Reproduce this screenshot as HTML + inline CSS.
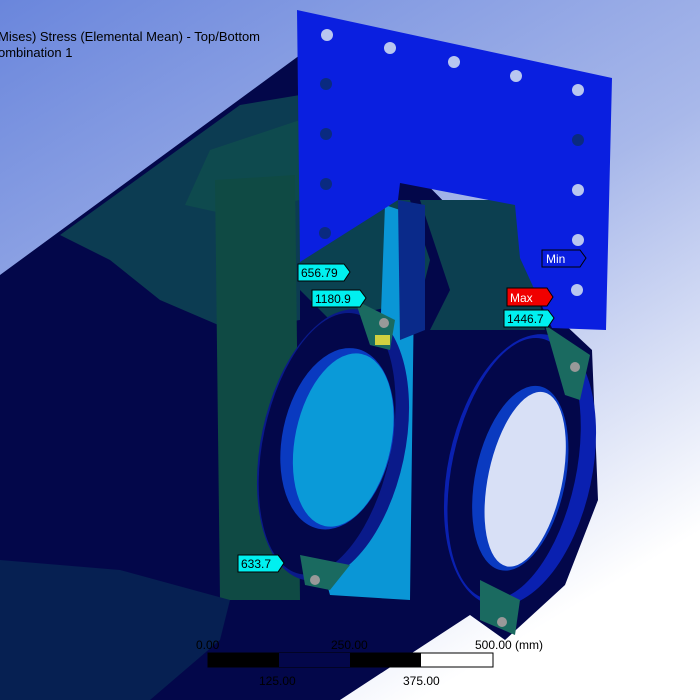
<!DOCTYPE html>
<html><head><meta charset="utf-8"><style>
html,body{margin:0;padding:0;width:700px;height:700px;overflow:hidden}
svg{display:block}
text{font-family:"Liberation Sans",sans-serif}
</style></head><body>
<svg width="700" height="700" viewBox="0 0 700 700" xmlns="http://www.w3.org/2000/svg">
<defs>
<linearGradient id="bg" x1="0" y1="0" x2="0.6" y2="1">
<stop offset="0" stop-color="#6a86dc"/><stop offset="0.55" stop-color="#a8b8ea"/><stop offset="1" stop-color="#ffffff"/>
</linearGradient>
</defs>
<rect width="700" height="700" fill="url(#bg)"/>
<!-- body -->
<polygon points="0,275 300,55 560,320 592,350 598,500 565,585 505,640 470,615 340,700 0,700" fill="#03074a"/>
<!-- teal regions -->
<polygon points="60,235 240,105 300,95 300,320 230,330 160,300 110,260" fill="#0c3c52"/>
<polygon points="210,150 300,120 300,200 230,215 185,205" fill="#0e4a4e"/>
<polygon points="215,180 295,175 300,600 220,600" fill="#0f4a44"/>
<polygon points="300,200 410,200 430,260 420,300 330,320 300,290" fill="#0b4150"/>
<polygon points="420,200 520,200 545,330 470,330 430,330 450,290" fill="#0c3f50"/>
<polygon points="0,560 120,570 230,600 220,640 150,700 0,700" fill="#062052"/>
<!-- light blue panel -->
<polygon points="385,205 415,215 410,600 330,595 320,560 360,480 380,340" fill="#0a96d6"/>
<polygon points="398,200 425,205 425,330 400,340" fill="#0a2a8a"/>
<!-- plate -->
<polygon points="297,10 612,78 606,330 552,328 520,258 515,205 400,183 398,200 300,262" fill="#0a1fe0"/>
<g fill="#b8c6f0">
<circle cx="327" cy="35" r="6"/><circle cx="390" cy="48" r="6"/><circle cx="454" cy="62" r="6"/><circle cx="516" cy="76" r="6"/><circle cx="578" cy="90" r="6"/>
<circle cx="578" cy="190" r="6"/><circle cx="578" cy="240" r="6"/><circle cx="577" cy="290" r="6"/>
</g>
<g fill="#0a2a80">
<circle cx="326" cy="84" r="6"/><circle cx="326" cy="134" r="6"/><circle cx="326" cy="184" r="6"/><circle cx="325" cy="233" r="6"/><circle cx="578" cy="140" r="6"/>
</g>
<!-- left ring -->
<g transform="rotate(12 333 445)">
<ellipse cx="333" cy="445" rx="72" ry="138" fill="#0a1a8a"/>
<ellipse cx="327" cy="445" rx="64" ry="133" fill="#03074a"/>
<ellipse cx="336" cy="438" rx="55" ry="92" fill="#0a3ac0"/>
<ellipse cx="342" cy="438" rx="48" ry="88" fill="#0a9ad8"/>
</g>
<polygon points="355,300 395,320 390,350 370,345" fill="#1a6a60"/>
<rect x="375" y="335" width="15" height="10" fill="#d0d040"/>
<polygon points="300,555 350,565 330,590 305,585" fill="#1a6a60"/>
<circle cx="384" cy="323" r="5" fill="#999"/><circle cx="315" cy="580" r="5" fill="#999"/>
<!-- right ring -->
<g transform="rotate(12 520 470)">
<ellipse cx="520" cy="470" rx="72" ry="138" fill="#0a20b0"/>
<ellipse cx="514" cy="470" rx="62" ry="133" fill="#03074a"/>
<ellipse cx="522" cy="478" rx="45" ry="94" fill="#0a3ac0"/>
<ellipse cx="527" cy="478" rx="37" ry="89" fill="#d8e0f6"/>
</g>
<polygon points="545,325 590,355 580,400 565,395" fill="#1a6a60"/>
<polygon points="480,580 520,600 515,635 480,620" fill="#1a6a60"/>
<circle cx="575" cy="367" r="5" fill="#999"/><circle cx="502" cy="622" r="5" fill="#999"/>
<!-- title -->
<text x="-2" y="41" font-size="13" fill="#000">Mises) Stress (Elemental Mean) - Top/Bottom</text>
<text x="-2" y="57" font-size="13" fill="#000">ombination 1</text>
<!-- labels -->
<g font-size="12">
<path d="M298,264 H344 L350,272 L344,281 H298 Z" fill="#00f0f0" stroke="#000"/><text x="301" y="277" fill="#000">656.79</text>
<path d="M312,290 H360 L366,298 L360,307 H312 Z" fill="#00f0f0" stroke="#000"/><text x="315" y="303" fill="#000">1180.9</text>
<path d="M238,555 H278 L284,563 L278,572 H238 Z" fill="#00f0f0" stroke="#000"/><text x="241" y="568" fill="#000">633.7</text>
<path d="M542,250 H580 L586,258 L580,267 H542 Z" fill="#0a1ee0" stroke="#000"/><text x="546" y="263" fill="#fff">Min</text>
<path d="M507,288 H547 L553,297 L547,306 H507 Z" fill="#f00000" stroke="#000"/><text x="510" y="302" fill="#fff">Max</text>
<path d="M504,310 H548 L554,318 L548,327 H504 Z" fill="#00f0f0" stroke="#000"/><text x="507" y="323" fill="#000">1446.7</text>
</g>
<!-- scale bar -->
<rect x="208" y="653" width="285" height="14" fill="#fff" stroke="#000"/>
<rect x="208" y="653" width="71" height="14" fill="#000"/>
<rect x="279" y="653" width="71" height="14" fill="#03074a"/>
<rect x="350" y="653" width="71" height="14" fill="#000"/>
<g font-size="12" fill="#000">
<text x="196" y="649">0.00</text><text x="331" y="649">250.00</text><text x="475" y="649">500.00 (mm)</text>
<text x="259" y="685">125.00</text><text x="403" y="685">375.00</text>
</g>
</svg>
</body></html>
